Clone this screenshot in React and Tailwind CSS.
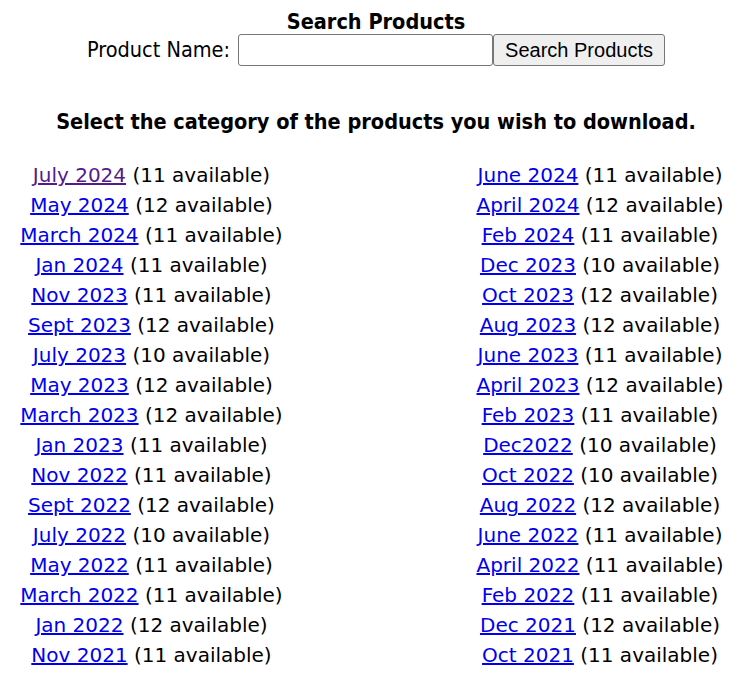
import React from "react";

const left = [
  ["July 2024", 11, true],
  ["May 2024", 12],
  ["March 2024", 11],
  ["Jan 2024", 11],
  ["Nov 2023", 11],
  ["Sept 2023", 12],
  ["July 2023", 10],
  ["May 2023", 12],
  ["March 2023", 12],
  ["Jan 2023", 11],
  ["Nov 2022", 11],
  ["Sept 2022", 12],
  ["July 2022", 10],
  ["May 2022", 11],
  ["March 2022", 11],
  ["Jan 2022", 12],
  ["Nov 2021", 11],
];

const right = [
  ["June 2024", 11],
  ["April 2024", 12],
  ["Feb 2024", 11],
  ["Dec 2023", 10],
  ["Oct 2023", 12],
  ["Aug 2023", 12],
  ["June 2023", 11],
  ["April 2023", 12],
  ["Feb 2023", 11],
  ["Dec2022", 10],
  ["Oct 2022", 10],
  ["Aug 2022", 12],
  ["June 2022", 11],
  ["April 2022", 11],
  ["Feb 2022", 11],
  ["Dec 2021", 12],
  ["Oct 2021", 11],
];

function Column({ items, className }) {
  return (
    <div className={`flex flex-col items-center ${className}`}>
      {items.map(([label, count, visited]) => (
        <div key={label} className="h-[30px] leading-[30px] whitespace-nowrap">
          <a
            href="#"
            className={`underline ${visited ? "text-[#551a8b]" : "text-[#0000ee]"}`}
          >
            {label}
          </a>{" "}
          ({count} available)
        </div>
      ))}
    </div>
  );
}

export default function App() {
  return (
    <div className="bg-white text-black min-h-[676px] font-['DejaVu_Sans_Condensed','DejaVu_Sans',sans-serif]">
      <div className="ml-[9px] w-[734px] flex flex-col items-center pt-[9px]">
        <h2 className="text-[21.5px] font-bold leading-[25px]">Search Products</h2>
        <form className="flex items-center" onSubmit={(e) => e.preventDefault()}>
          <label className="text-[21.5px] mr-[8px]">Product Name:</label>
          <input
            type="text"
            className="w-[255px] h-[32px] border border-[#767676] rounded-[3px] bg-white px-2"
          />
          <button
            type="submit"
            className="w-[172px] h-[32px] border border-[#767676] rounded-[3px] bg-[#efefef] text-[20px] font-['Liberation_Sans',sans-serif]"
          >
            Search Products
          </button>
        </form>
        <h3 className="mt-[43px] text-[21.5px] font-bold leading-[26px]">
          Select the category of the products you wish to download.
        </h3>
      </div>
      <div className="flex justify-between mt-[25px] text-[20px] font-['DejaVu_Sans',sans-serif]">
        <Column items={left} className="ml-[9px] w-[285px]" />
        <Column items={right} className="w-[286px]" />
      </div>
    </div>
  );
}
